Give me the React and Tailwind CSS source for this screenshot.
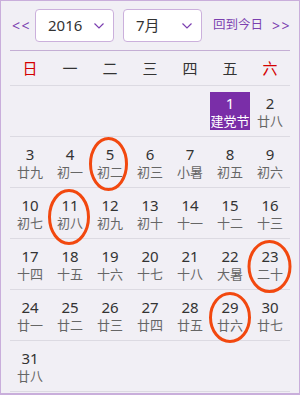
import React from "react";

const font = { fontFamily: '"Noto Sans", "Noto Sans CJK SC", sans-serif' };

const weeks = [
  [null, null, null, null, null, ["1", "建党节", true], ["2", "廿八"]],
  [["3", "廿九"], ["4", "初一"], ["5", "初二"], ["6", "初三"], ["7", "小暑"], ["8", "初五"], ["9", "初六"]],
  [["10", "初七"], ["11", "初八"], ["12", "初九"], ["13", "初十"], ["14", "十一"], ["15", "十二"], ["16", "十三"]],
  [["17", "十四"], ["18", "十五"], ["19", "十六"], ["20", "十七"], ["21", "十八"], ["22", "大暑"], ["23", "二十"]],
  [["24", "廿一"], ["25", "廿二"], ["26", "廿三"], ["27", "廿四"], ["28", "廿五"], ["29", "廿六"], ["30", "廿七"]],
  [["31", "廿八"], null, null, null, null, null, null],
];

const days = ["日", "一", "二", "三", "四", "五", "六"];

function Chevron() {
  return (
    <svg width="10" height="6" viewBox="0 0 10 6" className="shrink-0">
      <path d="M0.5 0.5 L5 5 L9.5 0.5" fill="none" stroke="#7b3fb0" strokeWidth="1.2" />
    </svg>
  );
}

function Select({ value, className }) {
  return (
    <div className={"shrink-0 h-[33px] bg-white border border-[#cbb0dc] rounded-[4px] flex items-center justify-between pl-[12px] pr-[9px] " + className}>
      <span className="text-[15px] text-[#333]">{value}</span>
      <Chevron />
    </div>
  );
}

export default function App() {
  return (
    <div className="relative w-[300px] h-[395px] bg-[#f1eff5] border border-b-2 border-[#c9aedb] overflow-hidden" style={font}>
      <div className="mx-[9px]">
        <div className="h-[50px] flex items-center whitespace-nowrap border-b border-[#c4aed4]">
          <span className="shrink-0 ml-[2px] w-[20px] text-[14px] text-[#7b3fb0] tracking-[1.5px]">&lt;&lt;</span>
          <Select value="2016" className="ml-[3px] w-[79px]" />
          <Select value="7月" className="ml-[9px] w-[79px]" />
          <span className="shrink-0 ml-[11px] text-[12.5px] text-[#7b3fb0]">回到今日</span>
          <span className="shrink-0 ml-[9px] text-[14px] text-[#7b3fb0] tracking-[1.5px]">&gt;&gt;</span>
        </div>
        <div className="h-[35px] grid grid-cols-7 items-center border-b border-[#dcdae2]">
          {days.map((d, i) => (
            <div key={d} className={"text-center text-[15px] " + (i === 0 || i === 6 ? "text-[#d40000]" : "text-[#333]")}>
              {d}
            </div>
          ))}
        </div>
        {weeks.map((w, wi) => (
          <div key={wi} className="h-[51px] grid grid-cols-7 border-b border-[#dcdae2]">
            {w.map((c, ci) => (
              <div key={ci} className="pt-[6px]">
                {c && (
                  <div className={"h-[38px] pt-[1px] text-center " + (c[2] ? "bg-[#7a2ea8]" : "")}>
                    <div className={"text-[15px] leading-[20px] " + (c[2] ? "text-white" : "text-[#333]")}>{c[0]}</div>
                    <div className={"text-[13px] leading-[16px] " + (c[2] ? "text-white" : "text-[#666]")}>{c[1]}</div>
                  </div>
                )}
              </div>
            ))}
          </div>
        ))}
      </div>
      <svg className="absolute left-[-1px] top-[-1px] pointer-events-none" width="300" height="395">
        <g fill="none" stroke="#f2480f" strokeWidth="3">
          <ellipse cx="108.5" cy="164" rx="18" ry="25.5" />
          <ellipse cx="69" cy="217" rx="19.5" ry="26.5" />
          <ellipse cx="269.5" cy="266.5" rx="20.5" ry="25" />
          <ellipse cx="230" cy="317.5" rx="19.5" ry="24" />
        </g>
      </svg>
    </div>
  );
}
